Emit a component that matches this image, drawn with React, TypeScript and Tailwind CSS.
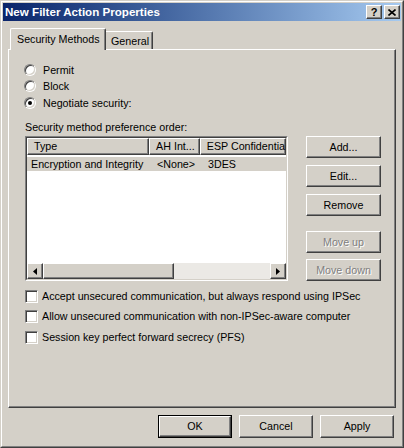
const raised =
  "border border-t-white border-l-white border-r-[#404040] border-b-[#404040] shadow-[inset_-1px_-1px_0_#808080]";

function Radio({ checked }: { checked?: boolean }) {
  return (
    <div className="w-3 h-3 rounded-full border border-t-[#808080] border-l-[#808080] border-r-white border-b-white">
      <div className="w-full h-full rounded-full bg-white shadow-[inset_1px_1px_0_#404040,inset_-1px_-1px_0_#d4d0c8] flex items-center justify-center">
        {checked && <div className="w-1 h-1 rounded-full bg-black" />}
      </div>
    </div>
  );
}

function Check() {
  return (
    <div className="w-[13px] h-[13px] shrink-0 border border-t-[#808080] border-l-[#808080] border-r-white border-b-white bg-white shadow-[inset_1px_1px_0_#404040,inset_-1px_-1px_0_#d4d0c8]" />
  );
}

function Button({
  label,
  disabled,
  def,
  className = "",
}: {
  label: string;
  disabled?: boolean;
  def?: boolean;
  className?: string;
}) {
  const inner = (
    <div
      className={`${raised} h-full flex items-center justify-center bg-[#d4d0c8] ${
        disabled ? "text-[#808080] [text-shadow:1px_1px_0_#fff]" : ""
      }`}
    >
      {label}
    </div>
  );
  if (def) {
    return <div className={`border border-black ${className}`}>{inner}</div>;
  }
  return <div className={className}>{inner}</div>;
}

function Arrow({ dir }: { dir: "left" | "right" }) {
  return (
    <div className={`${raised} w-4 h-4 bg-[#d4d0c8] flex items-center justify-center`}>
      <svg width="4" height="7" viewBox="0 0 4 7">
        {dir === "left" ? (
          <polygon points="4,0 4,7 0,3.5" fill="#000" />
        ) : (
          <polygon points="0,0 0,7 4,3.5" fill="#000" />
        )}
      </svg>
    </div>
  );
}

export default function App() {
  return (
    <div className="w-[404px] h-[448px] bg-[#d4d0c8] border border-t-[#d4d0c8] border-l-[#d4d0c8] border-r-[#404040] border-b-[#404040] font-['Liberation_Sans',Arial,sans-serif] text-[10.7px] text-black leading-none">
      <div className="h-full border border-t-white border-l-white border-r-[#808080] border-b-[#808080] p-px flex flex-col">
        {/* Title bar */}
        <div className="h-[18px] flex items-center justify-between pl-[2px] pr-[1px] bg-linear-to-r from-[#0a246a] to-[#a6caf0]">
          <span className="text-white font-bold text-[11.6px]">New Filter Action Properties</span>
          <div className="flex gap-[2px]">
            <div className={`${raised} w-4 h-[14px] bg-[#d4d0c8] flex items-center justify-center font-bold text-[11px]`}>
              ?
            </div>
            <div className={`${raised} w-4 h-[14px] bg-[#d4d0c8] flex items-center justify-center`}>
              <svg width="8" height="7" viewBox="0 0 8 7">
                <path d="M0.5 0.5 L7.5 6.5 M7.5 0.5 L0.5 6.5" stroke="#000" strokeWidth="1.6" />
              </svg>
            </div>
          </div>
        </div>

        {/* Tabs */}
        <div className="ml-[5px] mt-[7px] w-[388px]">
          <div className="flex items-end h-[22px] pl-[2px] relative z-10 -mb-px">
            <div className="h-[22px] w-[96px] bg-[#d4d0c8] border-t border-l border-r border-t-white border-l-white border-r-[#404040] shadow-[inset_-1px_0_0_#808080] rounded-t-[2px] pl-[6px] pt-[5px]">
              Security Methods
            </div>
            <div className="h-[18px] w-[47px] mb-px bg-[#d4d0c8] border-t border-r border-t-white border-r-[#404040] shadow-[inset_-1px_0_0_#808080] rounded-tr-[2px] pl-[5px] pt-[4px]">
              General
            </div>
          </div>

          {/* Panel */}
          <div className={`${raised} h-[359px] pl-[15px] pt-[12px] flex flex-col`}>
            <div className="h-4 flex items-center gap-[7px]">
              <Radio />
              <span>Permit</span>
            </div>
            <div className="h-4 flex items-center gap-[7px]">
              <Radio />
              <span>Block</span>
            </div>
            <div className="h-4 mt-px flex items-center gap-[7px]">
              <Radio checked />
              <span>Negotiate security:</span>
            </div>
            <div className="h-[14px] mt-[9px] ml-px flex items-center">
              Security method preference order:
            </div>

            <div className="flex items-start">
              <div className="ml-px mt-[2px] w-[263px] h-[145px] border border-t-[#808080] border-l-[#808080] border-r-white border-b-white">
                <div className="h-full border border-t-[#404040] border-l-[#404040] border-r-[#d4d0c8] border-b-[#d4d0c8] bg-white flex flex-col overflow-hidden">
                  <div className="flex h-[17px] shrink-0">
                    <div className={`${raised} w-[123px] bg-[#d4d0c8] pl-[6px] flex items-center`}>Type</div>
                    <div className={`${raised} w-[51px] bg-[#d4d0c8] pl-[6px] flex items-center whitespace-nowrap`}>AH Int...</div>
                    <div className={`${raised} flex-1 bg-[#d4d0c8] pl-[6px] flex items-center whitespace-nowrap`}>ESP Confidentia</div>
                  </div>
                  <div className="flex h-[14px] mt-[2px] bg-[#d4d0c8] items-center whitespace-nowrap">
                    <div className="w-[123px] pl-[4px]">Encryption and Integrity</div>
                    <div className="w-[51px] pl-[7px]">&lt;None&gt;</div>
                    <div className="flex-1 pl-[7px]">3DES</div>
                  </div>
                  <div className="mt-auto flex h-4 shrink-0 bg-[#ebe9e5]">
                    <Arrow dir="left" />
                    <div className={`${raised} w-[131px] bg-[#d4d0c8]`} />
                    <div className="flex-1" />
                    <Arrow dir="right" />
                  </div>
                </div>
              </div>

              <div className="ml-[18px] mt-[2px] flex flex-col w-[75px]">
                <Button label="Add..." className="h-[22px]" />
                <Button label="Edit..." className="h-[22px] mt-[7px]" />
                <Button label="Remove" className="h-[22px] mt-[7px]" />
                <Button label="Move up" disabled className="h-[22px] mt-[15px]" />
                <Button label="Move down" disabled className="h-[22px] mt-[6px]" />
              </div>
            </div>

            <div className="mt-[5px] ml-px flex flex-col">
              <div className="h-5 flex items-center gap-[4px]">
                <Check />
                <span>Accept unsecured communication, but always respond using IPSec</span>
              </div>
              <div className="h-5 flex items-center gap-[4px]">
                <Check />
                <span>Allow unsecured communication with non-IPSec-aware computer</span>
              </div>
              <div className="h-5 mt-px flex items-center gap-[4px]">
                <Check />
                <span>Session key perfect forward secrecy (PFS)</span>
              </div>
            </div>
          </div>
        </div>

        {/* Bottom buttons */}
        <div className="mt-[7px] flex justify-end gap-[7px] pr-[7px]">
          <Button label="OK" def className="w-[74px] h-[23px]" />
          <Button label="Cancel" className="w-[74px] h-[23px]" />
          <Button label="Apply" className="w-[74px] h-[23px]" />
        </div>
      </div>
    </div>
  );
}
